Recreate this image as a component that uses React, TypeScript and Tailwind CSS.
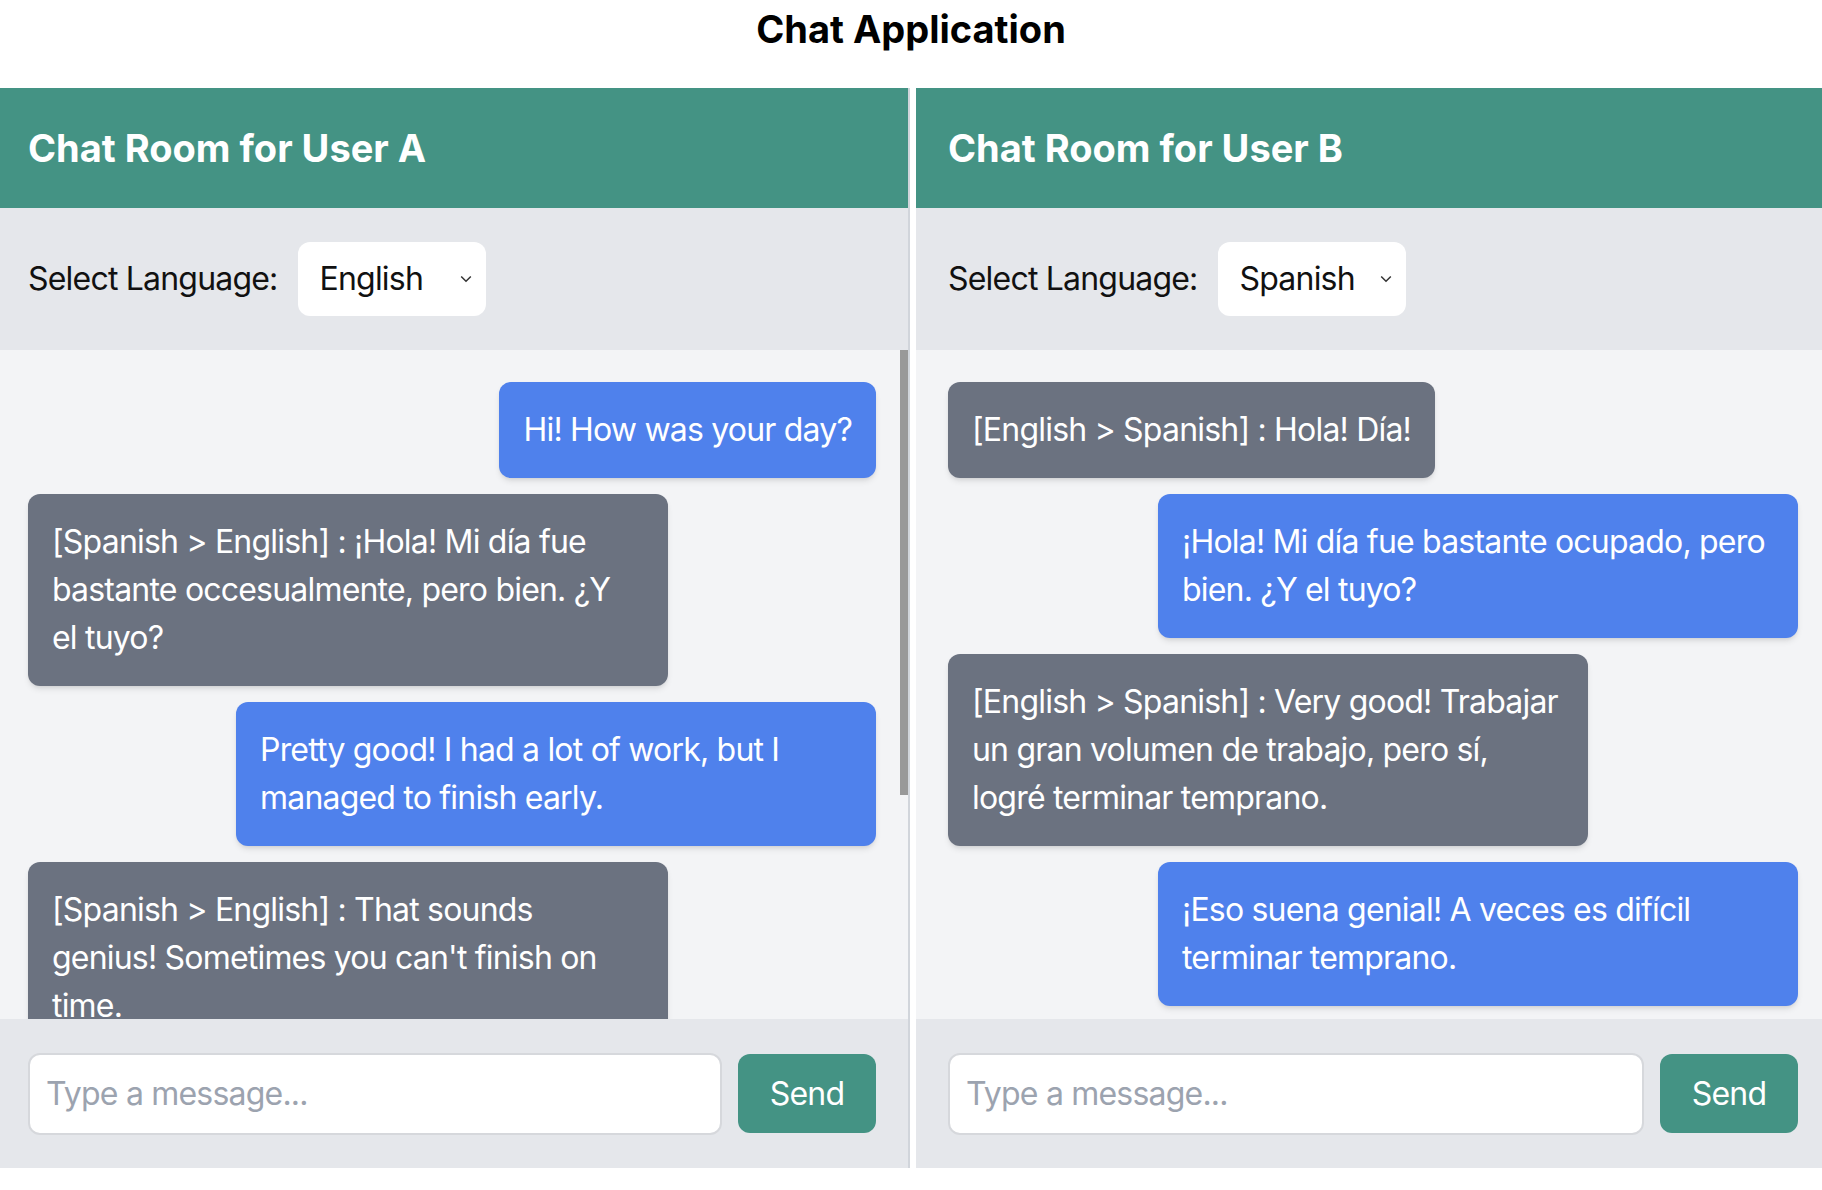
import React from "react";

type Msg = { mine: boolean; lines: string[] };

const roomA: Msg[] = [
  { mine: true, lines: ["Hi! How was your day?"] },
  {
    mine: false,
    lines: [
      "[Spanish > English] : ¡Hola! Mi día fue",
      "bastante occesualmente, pero bien. ¿Y",
      "el tuyo?",
    ],
  },
  { mine: true, lines: ["Pretty good! I had a lot of work, but I", "managed to finish early."] },
  {
    mine: false,
    lines: ["[Spanish > English] : That sounds", "genius! Sometimes you can't finish on", "time."],
  },
];

const roomB: Msg[] = [
  { mine: false, lines: ["[English > Spanish] : Hola! Día!"] },
  { mine: true, lines: ["¡Hola! Mi día fue bastante ocupado, pero", "bien. ¿Y el tuyo?"] },
  {
    mine: false,
    lines: [
      "[English > Spanish] : Very good! Trabajar",
      "un gran volumen de trabajo, pero sí,",
      "logré terminar temprano.",
    ],
  },
  { mine: true, lines: ["¡Eso suena genial! A veces es difícil", "terminar temprano."] },
];

function Bubble({ msg }: { msg: Msg }) {
  const width = msg.lines.length > 1 ? "w-[640px]" : "w-fit";
  const color = msg.mine ? "bg-[#4f81ec] self-end" : "bg-[#6b7280] self-start";
  return (
    <div className={`${width} ${color} shrink-0 rounded-[12px] px-[24px] py-[24px] text-white shadow-md`}>
      {msg.lines.map((l, i) => (
        <div key={i} className="whitespace-nowrap">
          {l}
        </div>
      ))}
    </div>
  );
}

function Room({
  user,
  language,
  messages,
  left,
}: {
  user: string;
  language: string;
  messages: Msg[];
  left: boolean;
}) {
  const pad = left ? "pl-[28px] pr-[32px]" : "pl-[32px] pr-[24px]";
  return (
    <div className="flex h-full flex-col">
      <div className={`flex h-[120px] shrink-0 items-center bg-[#449384] ${pad}`}>
        <h2 className="text-[38px] font-bold leading-[52px] tracking-normal text-white">Chat Room for {user}</h2>
      </div>

      <div className={`flex h-[142px] shrink-0 items-center gap-[20px] bg-[#e5e7eb] ${pad}`}>
        <span className="text-[#111]">Select Language:</span>
        <div className="flex h-[74px] w-[188px] items-center justify-between rounded-[12px] bg-white pl-[22px] pr-[14px] text-[#111]">
          <span>{language}</span>
          <svg width="12" height="8" viewBox="0 0 12 8" fill="none">
            <path d="M1.2 1.5l4.8 4.8 4.8-4.8" stroke="#333" strokeWidth="1.5" />
          </svg>
        </div>
      </div>

      <div className={`relative flex flex-1 flex-col gap-[16px] overflow-hidden bg-[#f3f4f6] pt-[32px] ${pad}`}>
        {messages.map((m, i) => (
          <Bubble key={i} msg={m} />
        ))}
        {left && <div className="absolute right-0 top-0 h-[445px] w-[8px] bg-[#999]" />}
      </div>

      <div className={`flex h-[149px] shrink-0 items-center gap-[16px] bg-[#e5e7eb] ${pad}`}>
        <input
          className="h-[82px] min-w-0 flex-1 rounded-[12px] border-2 border-[#d6d8dc] bg-white px-[16px] text-[#111] placeholder:text-[#9ca3af] outline-none"
          placeholder="Type a message..."
        />
        <button className="h-[79px] w-[138px] rounded-[12px] bg-[#449384] text-white">Send</button>
      </div>
    </div>
  );
}

export default function App() {
  return (
    <div
      className="min-h-screen w-full bg-white text-[32px] leading-[48px] tracking-[-0.8px]"
      style={{ fontFamily: "Inter, 'Noto Sans', sans-serif" }}
    >
      <h1 className="h-[88px] text-center text-[38px] font-bold leading-[58px] tracking-normal text-black">
        Chat Application
      </h1>
      <div className="flex h-[1080px]">
        <div className="w-[910px] shrink-0 border-r-2 border-[#d1d5db]">
          <Room user="User A" language="English" messages={roomA} left />
        </div>
        <div className="w-[6px] shrink-0" />
        <div className="min-w-0 flex-1">
          <Room user="User B" language="Spanish" messages={roomB} left={false} />
        </div>
      </div>
    </div>
  );
}
